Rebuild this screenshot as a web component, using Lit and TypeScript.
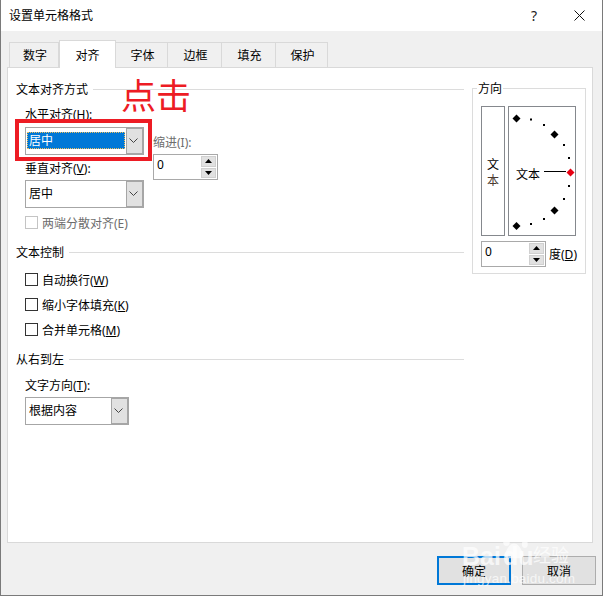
import { LitElement, css, html, svg } from 'lit'
import { customElement } from 'lit/decorators.js'

const chevron = html`<svg class="chev" width="9" height="6" viewBox="0 0 9 6"><path d="M0.5 0.5 L4.5 4.5 L8.5 0.5" fill="none" stroke="#444" stroke-width="1"/></svg>`

const spinBtns = html`<div class="spin-btns">
  <div class="spin-btn"><svg width="7" height="4" viewBox="0 0 7 4"><path d="M3.5 0 L7 4 L0 4 Z" fill="#000"/></svg></div>
  <div class="spin-btn"><svg width="7" height="4" viewBox="0 0 7 4"><path d="M0 0 L7 0 L3.5 4 Z" fill="#000"/></svg></div>
</div>`

const bigDots: [number, number, string][] = [
  [8.5, 11.5, '#000'], [46.5, 27.5, '#000'], [62.5, 65.5, '#e60012'], [46.5, 103.5, '#000'], [8.5, 119, '#000'],
]
const smallDots: [number, number][] = [
  [22, 12.5], [35, 18], [55, 38], [60, 51], [60, 79], [55, 92], [35, 112], [22, 117],
]

@customElement('app-root')
export class AppRoot extends LitElement {
  static styles = css`
    :host {
      display: block;
      width: 604px;
      height: 596px;
      overflow: hidden;
      background: #fff;
      font-family: "Noto Sans", "Noto Sans CJK SC", sans-serif;
      font-size: 12px;
      color: #000;
    }
    .window {
      position: relative;
      width: 603px;
      height: 596px;
      box-sizing: border-box;
      border-left: 1px solid #7a7a7a;
      border-right: 1px solid #7a7a7a;
      border-bottom: 1px solid #7a7a7a;
      background: #f0f0f0;
      display: flex;
      flex-direction: column;
    }
    .titlebar {
      height: 31px;
      flex: none;
      background: #fff;
      display: flex;
      align-items: center;
      padding-left: 8px;
      line-height: 16px;
    }
    .title { flex: 1; }
    .help { width: 14px; margin-right: 33px; font-size: 14px; text-align: center; color: #222; }
    .close { width: 11px; height: 11px; margin-right: 17px; display: block; }
    .tabs {
      display: flex;
      height: 25px;
      margin: 11px 0 0 8px;
      flex: none;
      position: relative;
      z-index: 1;
    }
    .tab {
      box-sizing: border-box;
      height: 25px;
      border: 1px solid #d9d9d9;
      border-bottom: none;
      border-left: none;
      display: flex;
      align-items: center;
      justify-content: center;
      line-height: 16px;
      padding: 2px 0 0 2px;
    }
    .tab.first { border-left: 1px solid #d9d9d9; }
    .tab.active {
      height: 28px;
      margin-top: -2px;
      background: #fff;
      border-left: 1px solid #d9d9d9;
      padding-left: 0;
    }
    .panel {
      box-sizing: border-box;
      margin: 0 0 0 6px;
      width: 586px;
      height: 476px;
      flex: none;
      background: #fff;
      border: 1px solid #d9d9d9;
      display: flex;
      padding: 13px 0 0 8px;
    }
    .left { width: 448px; flex: none; }
    .heading { display: flex; align-items: flex-start; height: 16px; line-height: 18px; }
    .heading::after { content: ''; flex: 1; height: 1px; background: #dcdcdc; margin: 8px 0 0 5px; }
    .label { height: 16px; line-height: 18px; white-space: nowrap; }
    .align-row { display: flex; margin-left: 9px; margin-top: 9px; }
    .align-col { width: 119px; }
    .indent-col { margin-left: 9px; padding-top: 28px; }
    .indent-col .label { color: #6d6d6d; }
    .select {
      box-sizing: border-box;
      height: 28px;
      border: 1px solid #a6a6a6;
      display: flex;
      align-items: stretch;
      background: #fff;
      margin-top: 5px;
    }
    .select .value {
      flex: 1;
      line-height: 26px;
      padding-left: 3px;
    }
    .select .value.sel {
      margin: 4px 1px 5px 1px;
      padding-left: 2px;
      line-height: 18px;
      background: #0078d7;
      color: #fff;
      outline: 1px dotted #f0c060;
      outline-offset: -1px;
    }
    .select .arrow {
      box-sizing: border-box;
      width: 18px;
      background: #e1e1e1;
      border: 2px solid #a6a6a6;
      border-left-width: 1px;
      margin: -1px -1px -1px 0;
      padding-right: 2px;
      display: flex;
      align-items: center;
      justify-content: center;
    }
    .spin {
      box-sizing: border-box;
      width: 65px;
      height: 26px;
      border: 1px solid #a9a9a9;
      margin-top: 4px;
      display: flex;
      align-items: stretch;
      background: #fff;
    }
    .spin .num { flex: 1; line-height: 20px; padding-left: 3px; }
    .spin-btns { width: 15px; display: flex; flex-direction: column; gap: 1px; padding: 1px 1px 1px 0; }
    .spin-btn {
      flex: 1;
      background: #e1e1e1;
      border: 1px solid #d0d0d0;
      display: flex;
      align-items: center;
      justify-content: center;
    }
    .check { display: flex; align-items: flex-start; height: 13px; line-height: 15px; white-space: nowrap; }
    .box {
      box-sizing: border-box;
      width: 13px;
      height: 13px;
      border: 1px solid #333;
      margin-right: 4px;
      background: #fff;
      flex: none;
    }
    .check.off { color: #6d6d6d; margin-top: 8px; }
    .check.off .box { border-color: #c4c4c4; }
    .checks { margin: 13px 0 0 9px; display: flex; flex-direction: column; gap: 12px; }
    .mt-15 { margin-top: 15px; }
    .mt-4 { margin-top: 4px; }
    .dir-label { margin: 10px 0 0 9px; }
    .dir-select { margin: 4px 0 0 9px; width: 104px; }
    .orient {
      position: relative;
      box-sizing: border-box;
      width: 114px;
      height: 186px;
      margin: 7px 0 0 8px;
      border: 1px solid #dcdcdc;
      padding: 17px 0 0 8px;
    }
    .orient .legend {
      position: absolute;
      left: 4px;
      top: -8px;
      background: #fff;
      padding: 0 1px;
      line-height: 16px;
    }
    .dial-row { display: flex; gap: 3px; }
    .vtext {
      box-sizing: border-box;
      width: 24px;
      height: 130px;
      border: 1px solid #85888d;
      display: flex;
      flex-direction: column;
      align-items: center;
      justify-content: center;
      line-height: 16px;
      padding-top: 3px;
    }
    .vtext .tint { color: #4a3a30; }
    .dial { box-sizing: border-box; width: 68px; height: 130px; border: 1px solid #85888d; }
    .dial svg { display: block; }
    .deg-row { display: flex; align-items: center; margin-top: 5px; }
    .deg-row .spin { margin-top: 0; margin-right: 3px; }
    .footer { display: flex; justify-content: flex-end; gap: 11px; margin: 13px 6px 0 0; }
    .btn {
      box-sizing: border-box;
      width: 74px;
      height: 29px;
      background: #e1e1e1;
      border: 1px solid #adadad;
      display: flex;
      align-items: center;
      justify-content: center;
      font-size: 12px;
    }
    .btn.primary { border: 2px solid #0078d7; }
    .callout {
      position: absolute;
      left: 14px;
      top: 119px;
      width: 137px;
      height: 42px;
      box-sizing: border-box;
      border: 4px solid #ed1c24;
      pointer-events: none;
    }
    .callout-text {
      position: absolute;
      left: 120px;
      top: 74px;
      font-size: 35px;
      line-height: 44px;
      color: #ed1c24;
      white-space: nowrap;
    }
    .mark {
      position: absolute;
      left: 461px;
      top: 528px;
      width: 115px;
      height: 60px;
      color: rgba(255, 255, 255, 0.72);
      pointer-events: none;
    }
    .mark .bai { position: absolute; left: 0; top: 13px; font: 700 25px/30px "Liberation Sans", sans-serif; }
    .mark .du { position: absolute; left: 41px; top: 13px; font: 700 25px/30px "Liberation Sans", sans-serif; }
    .mark .jy { position: absolute; left: 71px; top: 15px; font-size: 18px; line-height: 24px; }
    .mark .url { position: absolute; left: 1px; top: 43px; font: 13.5px/16px "Liberation Sans", sans-serif; letter-spacing: 0.2px; white-space: nowrap; }
    .mark svg { position: absolute; left: 37px; top: 3px; }
  `

  private paw() {
    return html`<svg width="30" height="30" viewBox="0 0 36 34" fill="rgba(255,255,255,0.65)">
      ${svg`<ellipse cx="9" cy="12" rx="4" ry="5"/><ellipse cx="17" cy="5" rx="4" ry="5"/><ellipse cx="26" cy="6" rx="4" ry="5"/><ellipse cx="31" cy="15" rx="3.5" ry="4.5"/>
      <path d="M18 14 C12 14 9 22 7 26 C5 31 12 33 18 31 C24 33 31 31 29 26 C27 22 24 14 18 14 Z"/>`}
    </svg>`
  }

  render() {
    return html`
      <div class="window">
        <div class="titlebar">
          <div class="title">设置单元格格式</div>
          <div class="help">?</div>
          <svg class="close" viewBox="0 0 11 11"><path d="M0.5 0.5 L10.5 10.5 M10.5 0.5 L0.5 10.5" stroke="#111" stroke-width="1" fill="none"/></svg>
        </div>
        <div class="tabs">
          <div class="tab first" style="width:50px">数字</div>
          <div class="tab active" style="width:57px">对齐</div>
          <div class="tab" style="width:52px">字体</div>
          <div class="tab" style="width:54px">边框</div>
          <div class="tab" style="width:54px">填充</div>
          <div class="tab" style="width:52px">保护</div>
        </div>
        <div class="panel">
          <div class="left">
            <div class="heading">文本对齐方式</div>
            <div class="align-row">
              <div class="align-col">
                <div class="label">水平对齐(<u>H</u>):</div>
                <div class="select">
                  <div class="value sel">居中</div>
                  <div class="arrow">${chevron}</div>
                </div>
                <div class="label" style="margin-top:5px">垂直对齐(<u>V</u>):</div>
                <div class="select mt-4">
                  <div class="value">居中</div>
                  <div class="arrow">${chevron}</div>
                </div>
                <div class="check off"><span class="box"></span>两端分散对齐(E)</div>
              </div>
              <div class="indent-col">
                <div class="label">缩进(I):</div>
                <div class="spin"><div class="num">0</div>${spinBtns}</div>
              </div>
            </div>
            <div class="heading mt-15">文本控制</div>
            <div class="checks">
              <div class="check"><span class="box"></span>自动换行(<u>W</u>)</div>
              <div class="check"><span class="box"></span>缩小字体填充(<u>K</u>)</div>
              <div class="check"><span class="box"></span>合并单元格(<u>M</u>)</div>
            </div>
            <div class="heading mt-15">从右到左</div>
            <div class="label dir-label">文字方向(<u>T</u>):</div>
            <div class="select dir-select">
              <div class="value">根据内容</div>
              <div class="arrow">${chevron}</div>
            </div>
          </div>
          <div class="orient">
            <div class="legend">方向</div>
            <div class="dial-row">
              <div class="vtext"><span>文</span><span class="tint">本</span></div>
              <div class="dial">
                <svg width="66" height="128" viewBox="0 0 66 128">
                  ${smallDots.map(([x, y]) => svg`<rect x=${x - 1} y=${y - 1} width="2" height="2" fill="#000"/>`)}
                  ${svg`<path d="M35 64.5 H57" stroke="#000" stroke-width="1"/>`}
                  ${bigDots.map(([x, y, c]) => svg`<path d="M${x - 1} ${y - 4} L${x + 3} ${y} L${x - 1} ${y + 4} L${x - 5} ${y} Z" fill=${c}/>`)}
                  ${svg`<text x="7" y="72" font-size="12" fill="#000">文本</text>`}
                </svg>
              </div>
            </div>
            <div class="deg-row">
              <div class="spin"><div class="num">0</div>${spinBtns}</div>
              <div>度(<u>D</u>)</div>
            </div>
          </div>
        </div>
        <div class="footer">
          <div class="btn primary">确定</div>
          <div class="btn">取消</div>
        </div>
        <div class="callout-text">点击</div>
        <div class="callout"></div>
        <div class="mark">
          ${this.paw()}
          <div class="bai">Bai</div>
          <div class="du">du</div>
          <div class="jy">经验</div>
          <div class="url">jingyan.baidu.com</div>
        </div>
      </div>
    `
  }
}
